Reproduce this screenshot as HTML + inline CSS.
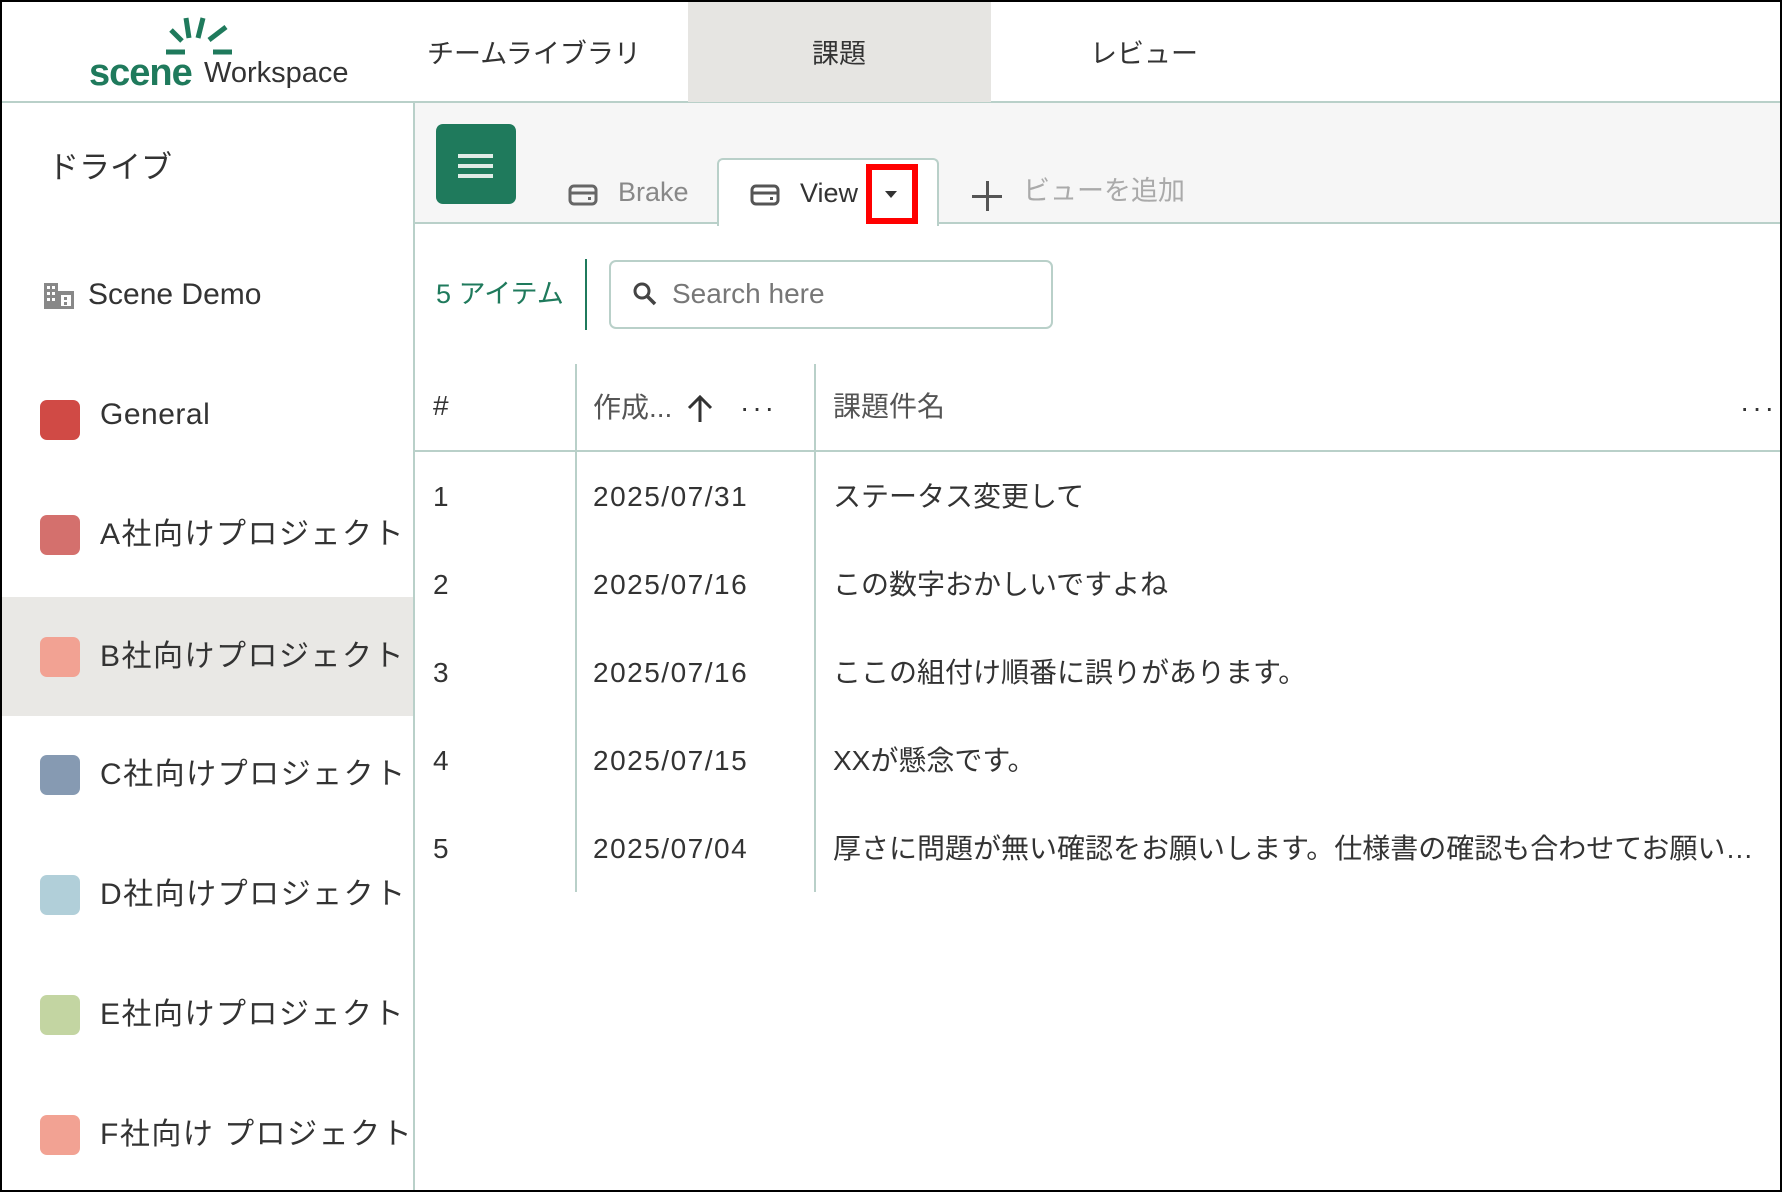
<!DOCTYPE html>
<html><head><meta charset="utf-8">
<style>
*{box-sizing:border-box;margin:0;padding:0}
html,body{width:1782px;height:1192px;overflow:hidden;background:#fff;font-family:"Liberation Sans","Noto Sans CJK JP",sans-serif;color:#333}
.frame{position:absolute;left:0;top:0;width:1782px;height:1192px;border:2px solid #000}
.abs{position:absolute;white-space:nowrap}
.hdr{position:absolute;left:0;top:0;width:1782px;height:103px;border-bottom:2px solid #b9d0c9}
.nav{font-size:27px;color:#333;top:32px}
.side{position:absolute;left:0;top:103px;width:415px;height:1089px;border-right:2px solid #b9d0c9}
.item{position:absolute;left:0;width:413px;height:119px}
.sw{position:absolute;left:40px;top:40px;width:40px;height:40px;border-radius:7px}
.it{position:absolute;left:100px;top:34px;font-size:30px;color:#333;white-space:nowrap;letter-spacing:1.5px}
.tool{position:absolute;left:415px;top:103px;width:1367px;height:121px;background:#f6f6f6;border-bottom:2px solid #b9d0c9}
.cell{font-family:"Liberation Sans Narrow","Liberation Sans","Noto Sans CJK JP",sans-serif;font-size:28px;color:#333}
.jp{margin-top:-5px}
.vl{position:absolute;width:2px;background:#b9d0c9}
</style></head><body>
<div class="hdr">
  <svg class="abs" style="left:160px;top:12px" width="80" height="50" viewBox="160 12 80 50">
    <g stroke="#1f7a5c" stroke-width="5" stroke-linecap="butt" fill="none">
      <line x1="166" y1="52" x2="185" y2="52"/>
      <line x1="213" y1="52" x2="232" y2="52"/>
      <line x1="171" y1="30" x2="182" y2="41"/>
      <line x1="186" y1="18" x2="189" y2="38"/>
      <line x1="203" y1="18" x2="198" y2="38"/>
      <line x1="226" y1="27" x2="209" y2="40"/>
    </g>
  </svg>
  <div class="abs" style="left:89px;top:52px;font-size:38px;font-weight:bold;color:#1f7a5c;letter-spacing:-1px">scene</div>
  <div class="abs" style="left:204px;top:57px;font-size:29px;color:#333">Workspace</div>
  <div class="abs nav" style="left:427px">チームライブラリ</div>
  <div class="abs" style="left:688px;top:2px;width:303px;height:100px;background:#e6e5e2"></div>
  <div class="abs nav" style="left:812px">課題</div>
  <div class="abs nav" style="left:1090px">レビュー</div>
</div>
<div class="side">
  <div class="abs" style="left:48px;top:39px;font-size:31px;color:#333">ドライブ</div>
  <svg class="abs" style="left:44px;top:180px" width="30" height="26" viewBox="0 0 30 26">
    <g fill="#888"><rect x="0" y="0" width="14" height="26"/><rect x="14" y="8" width="16" height="18"/></g>
    <g fill="#fff"><rect x="3" y="3" width="3" height="3"/><rect x="8" y="3" width="3" height="3"/><rect x="3" y="9" width="3" height="3"/><rect x="8" y="9" width="3" height="3"/><rect x="3" y="15" width="3" height="3"/><rect x="8" y="15" width="3" height="3"/><rect x="17" y="12" width="10" height="11"/></g>
    <g fill="#888"><rect x="20" y="14" width="3" height="3"/><rect x="20" y="19" width="3" height="3"/></g>
  </svg>
  <div class="abs" style="left:88px;top:175px;font-size:30px;color:#333">Scene Demo</div>
  <div class="item" style="top:257px"><div class="sw" style="background:#d04a45"></div><div class="it" style="letter-spacing:0.5px;top:38px">General</div></div>
  <div class="item" style="top:372px"><div class="sw" style="background:#d4706d"></div><div class="it">A社向けプロジェクト</div></div>
  <div class="item" style="top:494px;background:#e9e8e5"><div class="sw" style="background:#f2a293"></div><div class="it">B社向けプロジェクト</div></div>
  <div class="item" style="top:612px"><div class="sw" style="background:#869ab2"></div><div class="it">C社向けプロジェクト</div></div>
  <div class="item" style="top:732px"><div class="sw" style="background:#b1cfd9"></div><div class="it">D社向けプロジェクト</div></div>
  <div class="item" style="top:852px"><div class="sw" style="background:#c3d5a2"></div><div class="it">E社向けプロジェクト</div></div>
  <div class="item" style="top:972px"><div class="sw" style="background:#f2a293"></div><div class="it">F社向け プロジェクト</div></div>
</div>
<div class="tool">
  <div class="abs" style="left:21px;top:21px;width:80px;height:80px;background:#1f7a5c;border-radius:7px"></div>
  <div class="abs" style="left:43px;top:51px;width:35px;height:4px;background:#e0ece7;box-shadow:0 10px 0 #e0ece7,0 20px 0 #e0ece7"></div>
  <div class="abs" style="left:302px;top:55px;width:222px;height:68px;background:#fff;border:2px solid #b9d0c9;border-bottom:none;border-radius:6px 6px 0 0"></div>
  <svg class="abs" style="left:153px;top:81px" width="30" height="22" viewBox="0 0 30 22"><rect x="2" y="2" width="26" height="18" rx="4" fill="none" stroke="#666" stroke-width="3"/><line x1="2" y1="9" x2="28" y2="9" stroke="#666" stroke-width="3"/><rect x="20" y="13" width="3" height="3" fill="#666"/></svg>
  <div class="abs" style="left:203px;top:74px;font-size:27px;color:#888">Brake</div>
  <svg class="abs" style="left:335px;top:81px" width="30" height="22" viewBox="0 0 30 22"><rect x="2" y="2" width="26" height="18" rx="4" fill="none" stroke="#555" stroke-width="3"/><line x1="2" y1="9" x2="28" y2="9" stroke="#555" stroke-width="3"/><rect x="20" y="13" width="3" height="3" fill="#555"/></svg>
  <div class="abs" style="left:385px;top:75px;font-size:27px;color:#333">View</div>
  <div class="abs" style="left:451px;top:61px;width:52px;height:60px;border:6px solid #f00"></div>
  <div class="abs" style="left:470px;top:88px;width:0;height:0;border-left:6px solid transparent;border-right:6px solid transparent;border-top:7px solid #333"></div>
  <div class="abs" style="left:557px;top:92px;width:30px;height:3px;background:#555"></div>
  <div class="abs" style="left:571px;top:78px;width:3px;height:30px;background:#555"></div>
  <div class="abs" style="left:608px;top:66px;font-size:27px;color:#aaa">ビューを追加</div>
</div>
<div class="abs" style="left:436px;top:272px;font-size:27px;color:#1f7a5c">5 アイテム</div>
<div class="abs" style="left:585px;top:259px;width:2px;height:71px;background:#1f7a5c"></div>
<div class="abs" style="left:609px;top:260px;width:444px;height:69px;border:2px solid #b9d0c9;border-radius:7px"></div>
<svg class="abs" style="left:632px;top:281px" width="26" height="26" viewBox="0 0 26 26"><circle cx="10" cy="10" r="7" fill="none" stroke="#444" stroke-width="3"/><line x1="15" y1="15" x2="23" y2="23" stroke="#444" stroke-width="3.5"/></svg>
<div class="abs cell" style="left:672px;top:278px;color:#777">Search here</div>
<div class="vl" style="left:575px;top:364px;height:528px"></div>
<div class="vl" style="left:814px;top:364px;height:528px"></div>
<div class="abs" style="left:415px;top:450px;width:1367px;height:2px;background:#b9d0c9"></div>
<div class="abs cell" style="left:433px;top:390px">#</div>
<div class="abs cell" style="left:593px;top:386px;color:#555">作成...</div>
<svg class="abs" style="left:686px;top:394px" width="28" height="30" viewBox="0 0 28 30"><path d="M14 28V4M3 14L14 3 25 14" fill="none" stroke="#333" stroke-width="3"/></svg>
<div class="abs cell" style="left:740px;top:392px;color:#333;letter-spacing:3px">···</div>
<div class="abs cell" style="left:833px;top:385px;color:#555">課題件名</div>
<div class="abs cell" style="left:1740px;top:392px;color:#333;letter-spacing:3px">···</div>
<div class="abs cell" style="left:433px;top:481px">1</div><div class="abs cell" style="left:593px;top:481px;letter-spacing:1.5px">2025/07/31</div><div class="abs cell jp" style="left:833px;top:480px">ステータス変更して</div>
<div class="abs cell" style="left:433px;top:569px">2</div><div class="abs cell" style="left:593px;top:569px;letter-spacing:1.5px">2025/07/16</div><div class="abs cell jp" style="left:833px;top:568px">この数字おかしいですよね</div>
<div class="abs cell" style="left:433px;top:657px">3</div><div class="abs cell" style="left:593px;top:657px;letter-spacing:1.5px">2025/07/16</div><div class="abs cell jp" style="left:833px;top:656px">ここの組付け順番に誤りがあります。</div>
<div class="abs cell" style="left:433px;top:745px">4</div><div class="abs cell" style="left:593px;top:745px;letter-spacing:1.5px">2025/07/15</div><div class="abs cell jp" style="left:833px;top:744px">XXが懸念です。</div>
<div class="abs cell" style="left:433px;top:833px">5</div><div class="abs cell" style="left:593px;top:833px;letter-spacing:1.5px">2025/07/04</div><div class="abs cell jp" style="left:833px;top:832px;width:942px;overflow:hidden;text-overflow:ellipsis">厚さに問題が無い確認をお願いします。仕様書の確認も合わせてお願いします。</div>
<div class="frame"></div>
</body></html>
